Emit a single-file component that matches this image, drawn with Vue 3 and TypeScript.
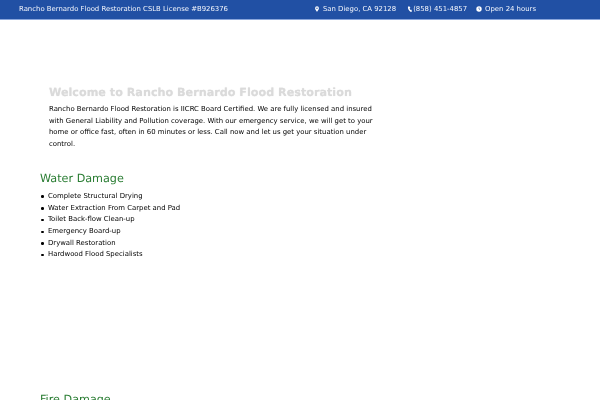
<template>
  <div class="page">
    <header class="topbar">
      <span>Rancho Bernardo Flood Restoration CSLB License #B926376</span>
      <div class="contact">
        <span class="item">
          <svg class="icon" viewBox="0 0 10 10"><path fill="#fff" fill-rule="evenodd" d="M5 .5a3.2 3.2 0 0 0-3.2 3.2C1.800 6 5 9.500 5 9.500S8.200 6 8.200 3.700A3.200 3.200 0 0 0 5 .5zm0 2a1.200 1.200 0 1 1 0 2.400 1.200 1.200 0 0 1 0-2.400z" /></svg>
          San Diego, CA 92128
        </span>
        <span class="item phone">
          <svg class="icon" viewBox="0 0 10 10"><path fill="#fff" d="M3.400.4 1.600 1.300C1 4.500 3.400 8.800 6.500 9.800l2-.9-1.600-2.900-1.300.6C4.900 5.700 4.400 4.300 4.500 3.300l1.300-.6z" /></svg>
          (858) 451-4857
        </span>
        <span class="item">
          <svg class="icon" viewBox="0 0 10 10"><circle cx="5" cy="5" r="4.500" fill="#fff" /><path d="M5 2.400V5l1.800 1.100" fill="none" stroke="#2150a4" stroke-width="1.100" /></svg>
          Open 24 hours
        </span>
      </div>
    </header>
    <main class="content">
      <section class="intro">
        <h1>Welcome to Rancho Bernardo Flood Restoration</h1>
        <p>Rancho Bernardo Flood Restoration is IICRC Board Certified. We are fully licensed and insured with General Liability and Pollution coverage. With our emergency service, we will get to your home or office fast, often in 60 minutes or less. Call now and let us get your situation under control.</p>
      </section>
      <section class="service">
        <h2>Water Damage</h2>
        <ul>
          <li v-for="item in waterItems" :key="item">{{ item }}</li>
        </ul>
      </section>
      <section class="service">
        <h2>Fire Damage</h2>
      </section>
    </main>
  </div>
</template>

<script setup lang="ts">
const waterItems: string[] = [
  'Complete Structural Drying',
  'Water Extraction From Carpet and Pad',
  'Toilet Back-flow Clean-up',
  'Emergency Board-up',
  'Drywall Restoration',
  'Hardwood Flood Specialists'
]
</script>

<style>
html, body {
  margin: 0;
  overflow: hidden;
  background: #fff;
}
</style>

<style scoped>
.page {
  height: 400px;
  overflow: hidden;
  font-family: "DejaVu Sans", sans-serif;
  font-size: 6.900px;
  line-height: 11.700px;
  color: #000;
  text-rendering: geometricPrecision;
  will-change: transform;
}

.topbar {
  display: flex;
  justify-content: space-between;
  align-items: center;
  height: 19px;
  padding: 0 64px 0 19px;
  background: #2150a4;
  border-bottom: 1px solid #8aa6dc;
  color: #f2f5fc;
  white-space: nowrap;
}

.contact {
  display: flex;
  gap: 9px;
}

.item {
  display: flex;
  align-items: center;
  gap: 3px;
}

.phone {
  gap: 0;
  margin-left: 2px;
}

.icon {
  width: 6px;
  height: 6px;
}

.content {
  padding: 0 40px;
}

.intro {
  width: 332px;
  padding: 65px 0 0 9px;
}

h1 {
  margin: 0 0 3px;
  font-size: 11.200px;
  line-height: 16px;
  font-weight: 700;
  color: #dadada;
  text-shadow: 0 0 1px rgba(0, 0, 0, 0.12);
}

p {
  margin: 0;
}

.service h2 {
  margin: 20px 0 4px;
  font-size: 11.200px;
  line-height: 16px;
  font-weight: 400;
  color: #2a7d33;
}

ul {
  margin: 0;
  padding: 0 0 0 1px;
  list-style: none;
  height: 181px;
}

li {
  display: flex;
  align-items: center;
  gap: 4.500px;
}

li::before {
  content: "";
  width: 2.500px;
  height: 2.500px;
  border-radius: 50%;
  background: #000;
}
</style>
